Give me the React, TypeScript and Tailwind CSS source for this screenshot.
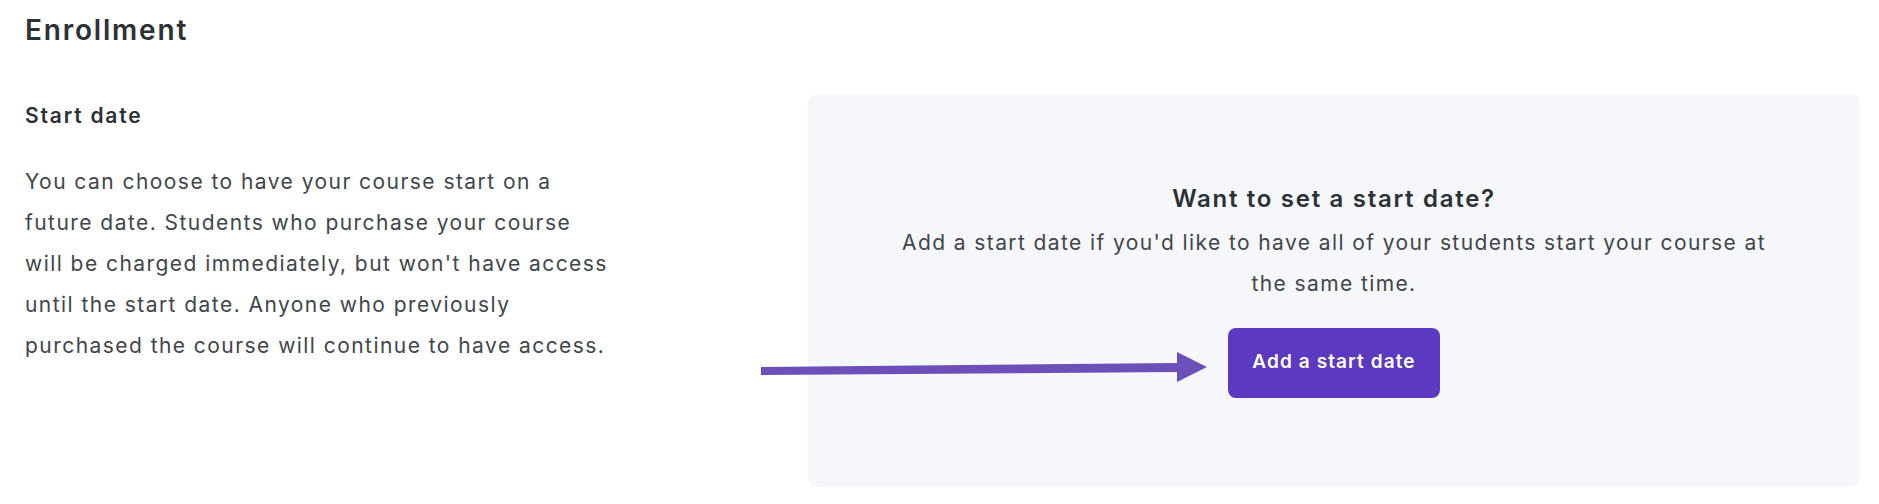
import React from "react";

export default function App() {
  return (
    <div
      className="relative w-[1879px] h-[504px] bg-white overflow-hidden"
      style={{ fontFamily: "Inter, 'Noto Sans', sans-serif" }}
    >
      <div className="pl-[25px] pr-[19px] pt-[12px]">
        <h1 className="text-[28px] leading-[36px] font-semibold tracking-[1.8px] text-[#2b3137]">Enrollment</h1>
        <div className="flex mt-[46px]">
          <div className="w-[783px] shrink-0 pt-[8px]">
            <h2 className="text-[21px] leading-[28px] font-semibold tracking-[1.8px] text-[#2b3137]">Start date</h2>
            <p className="mt-[31px] text-[21px] leading-[41px] tracking-[1.45px] text-[#41464b]">
              You can choose to have your course start on a
              <br />
              future date. Students who purchase your course
              <br />
              will be charged immediately, but won't have access
              <br />
              until the start date. Anyone who previously
              <br />
              purchased the course will continue to have access.
            </p>
          </div>
          <div className="flex-1 h-[393px] rounded-[10px] bg-[#f6f7fb] flex flex-col items-center justify-center text-center">
            <h3 className="text-[24px] leading-[30px] font-semibold tracking-[1.7px] text-[#2b3137]">
              Want to set a start date?
            </h3>
            <p className="mt-[8px] text-[21px] leading-[41px] tracking-[1.4px] text-[#41464b]">
              Add a start date if you'd like to have all of your students start your course at
              <br />
              the same time.
            </p>
            <button className="mt-[24px] w-[212px] h-[70px] rounded-[8px] bg-[#5b39c1] text-white text-[19px] font-semibold tracking-[1.1px]">
              Add a start date
            </button>
          </div>
        </div>
      </div>
      <svg
        className="absolute left-[760px] top-[350px]"
        width="450"
        height="34"
        viewBox="0 0 450 34"
      >
        <polygon points="1,17 418,13 418,22 1,25" fill="#6d4fb9" />
        <polygon points="417,2 447,17 417,32" fill="#6d4fb9" />
      </svg>
    </div>
  );
}
